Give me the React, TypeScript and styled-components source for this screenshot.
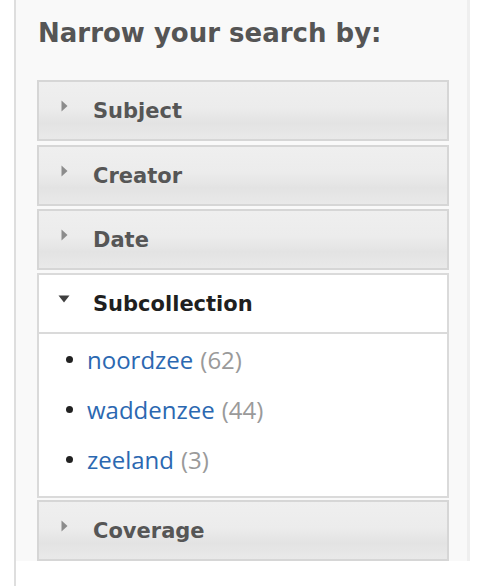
import React from "react";
import styled, { createGlobalStyle } from "styled-components";

const Global = createGlobalStyle`
  html, body { margin: 0; padding: 0; background: #ffffff; }
  #root { min-height: 586px; }
`;

const Column = styled.div`
  margin-left: 14px;
  min-height: 586px;
  border-left: 2px solid #dedede;
  box-sizing: border-box;
`;

const Panel = styled.aside`
  width: 454px;
  box-sizing: border-box;
  background: #f9f9f9;
  border-right: 3px solid #efefef;
  padding: 15px 18px 0 21px;
`;

const Title = styled.h2`
  margin: 0 0 0 1px;
  font-family: "DejaVu Sans", Verdana, sans-serif;
  font-weight: bold;
  font-size: 26px;
  line-height: 36px;
  color: #555555;
`;

const Accordion = styled.div`
  margin-top: 29px;
  display: flex;
  flex-direction: column;
`;

const Header = styled.div<{ $open?: boolean; $gap: number }>`
  margin-top: ${(p) => p.$gap}px;
  height: 61px;
  box-sizing: border-box;
  display: flex;
  align-items: center;
  padding-left: 16px;
  border: 2px solid ${(p) => (p.$open ? "#dadada" : "#d6d6d6")};
  background: ${(p) =>
    p.$open
      ? "#ffffff"
      : "linear-gradient(to bottom, #efefef 0%, #ececec 45%, #e3e3e3 72%, #e9e9e9 100%)"};
  font-family: "DejaVu Sans", Verdana, sans-serif;
  font-weight: bold;
  font-size: 21px;
  color: ${(p) => (p.$open ? "#1f1f1f" : "#565656")};
`;

const IconBox = styled.span`
  width: 18px;
  height: 18px;
  margin-right: 20px;
  margin-bottom: 10px;
  display: flex;
  align-items: center;
  justify-content: center;
`;

const Content = styled.div`
  height: 164px;
  box-sizing: border-box;
  background: #ffffff;
  border: 2px solid #dadada;
  border-top: none;
`;

const List = styled.ul`
  list-style: none;
  margin: 0;
  padding: 0 0 0 27px;
`;

const Item = styled.li`
  height: 50px;
  display: flex;
  align-items: center;
  font-family: "Open Sans", "Segoe UI", sans-serif;
  font-size: 24px;
  &::before {
    content: "";
    width: 7px;
    height: 7px;
    border-radius: 50%;
    background: #222222;
    margin-right: 14px;
  }
`;

const Link = styled.a`
  color: #2b68b1;
  text-decoration: none;
`;

const Count = styled.span`
  color: #9a9a9a;
  margin-left: 7px;
`;

const Arrow = ({ open }: { open?: boolean }) =>
  open ? (
    <svg width="12" height="8" viewBox="0 0 12 8">
      <path d="M0.5 0.5 L11.5 0.5 L6 7.5 Z" fill="#3f3f3f" />
    </svg>
  ) : (
    <svg width="7" height="12" viewBox="0 0 7 12">
      <path d="M0.5 0.5 L6.5 6 L0.5 11.5 Z" fill="#8c8c8c" />
    </svg>
  );

const facets = [
  { label: "Subject", gap: 0 },
  { label: "Creator", gap: 4 },
  { label: "Date", gap: 3 },
];

const items = [
  { name: "noordzee", count: 62 },
  { name: "waddenzee", count: 44 },
  { name: "zeeland", count: 3 },
];

export default function App() {
  return (
    <>
      <Global />
      <Column>
        <Panel>
          <Title>Narrow your search by:</Title>
          <Accordion>
            {facets.map((f) => (
              <Header key={f.label} $gap={f.gap}>
                <IconBox>
                  <Arrow />
                </IconBox>
                {f.label}
              </Header>
            ))}
            <Header $open $gap={3}>
              <IconBox>
                <Arrow open />
              </IconBox>
              Subcollection
            </Header>
            <Content>
              <List>
                {items.map((it) => (
                  <Item key={it.name}>
                    <Link href="#">{it.name}</Link>
                    <Count>({it.count})</Count>
                  </Item>
                ))}
              </List>
            </Content>
            <Header $gap={2}>
              <IconBox>
                <Arrow />
              </IconBox>
              Coverage
            </Header>
          </Accordion>
        </Panel>
      </Column>
    </>
  );
}
